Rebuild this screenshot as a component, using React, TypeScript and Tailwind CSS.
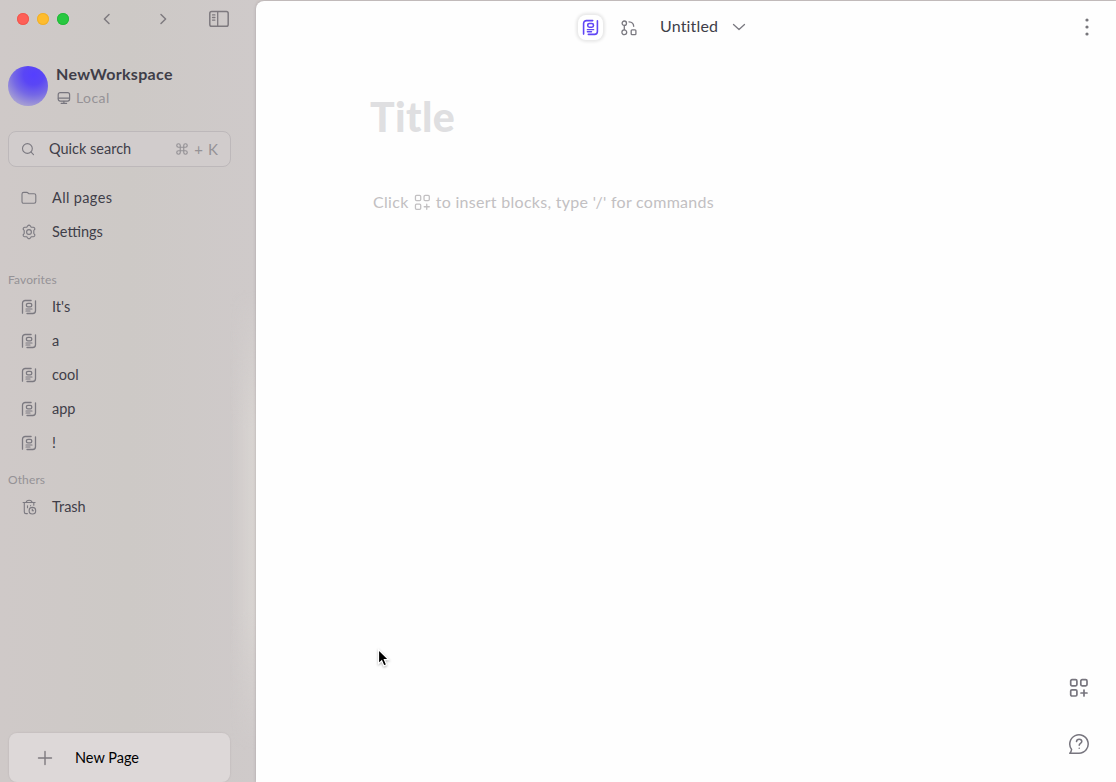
import type { ReactNode } from "react";

type IconProps = { className?: string };

function Svg({ className = "", size = 24, children }: { className?: string; size?: number; children: ReactNode }) {
  return (
    <svg
      viewBox={`0 0 ${size} ${size}`}
      fill="none"
      stroke="currentColor"
      strokeWidth={1.5}
      strokeLinecap="round"
      strokeLinejoin="round"
      className={`shrink-0 ${className}`}
    >
      {children}
    </svg>
  );
}

function PageIcon({ className }: IconProps) {
  return (
    <Svg className={className} size={16}>
      <path d="M1.5 14.2V4.2a2.7 2.7 0 0 1 2.7-2.7h5.9" />
      <path d="M14.5 1.8v10a2.7 2.7 0 0 1-2.7 2.7H6" />
      <rect x="5.4" y="4.3" width="5.4" height="3.5" rx="1.6" />
      <path d="M5 10h6M5 12h4" strokeWidth="1.2" />
    </Svg>
  );
}

function BlocksIcon({ className }: IconProps) {
  return (
    <Svg className={className} size={20}>
      <rect x="1.7" y="1.7" width="6.2" height="6.2" rx="1.3" />
      <rect x="11.8" y="1.7" width="6.2" height="6.2" rx="1.3" />
      <rect x="1.7" y="11.8" width="6.2" height="6.2" rx="1.3" />
      <path d="M15 12v6M12 15h6" />
    </Svg>
  );
}

function EdgelessIcon({ className }: IconProps) {
  return (
    <Svg className={className} size={16}>
      <circle cx="3.3" cy="3.2" r="2.2" />
      <circle cx="3.3" cy="12.3" r="2.4" />
      <rect x="10.2" y="9.9" width="4.7" height="4.7" rx="0.9" />
      <path d="M3.3 5.5v4.200M8 1.8c2.7.2 4.6 2 4.7 4.5" />
    </Svg>
  );
}

function NavRow({ icon, label, className = "tracking-normal" }: { icon: ReactNode; label: string; className?: string }) {
  return (
    <div className="flex h-[34px] items-center pl-[21px] text-[#3f3e49]">
      <span className="flex w-[31px] items-center text-[#7b7980]">{icon}</span>
      <span className={`text-[14.5px] leading-[20px] ${className}`}>{label}</span>
    </div>
  );
}

const favorites = ["It's", "a", "cool", "app", "!"];

function Sidebar() {
  return (
    <aside className="relative flex h-full w-[256px] shrink-0 flex-col bg-linear-to-r from-[#cfc9c8] via-[#cdc9c6] to-[#cfcaca]">
      <div className="absolute top-[290px] right-0 h-[460px] w-[26px] bg-linear-to-r from-[#d9d5d2]/0 to-[#d9d5d2] mask-y-from-70% mask-y-to-100%" />
      <div className="flex h-[38px] items-center pl-[17px] text-[#7e7a7f]">
        <span className="flex gap-2">
          <span className="size-3 rounded-full bg-[#fe5f57] inset-ring inset-ring-[#f0584f]" />
          <span className="size-3 rounded-full bg-[#febc2e] inset-ring inset-ring-[#efb02c]" />
          <span className="size-3 rounded-full bg-[#28c840] inset-ring inset-ring-[#24ba3a]" />
        </span>
        <Svg className="ml-[32px] size-3" size={12}><path d="M8 1.5 3.4 6 8 10.5" /></Svg>
        <Svg className="ml-[44px] size-3" size={12}><path d="M4 1.5 8.6 6 4 10.5" /></Svg>
        <Svg className="ml-[40px] size-5" size={20}>
          <rect x="0.8" y="2.6" width="18.4" height="14.6" rx="1.8" />
          <path d="M8.7 2.6v14.6M3.5 5.9h2.4M3.5 8.5h2.4M3.5 11.1h2.4" strokeWidth="1.3" />
        </Svg>
      </div>

      <div className="mt-[26px] flex h-[44px] items-center pl-2">
        <div className="size-10 rounded-full bg-[radial-gradient(circle_at_64%_22%,#553fff_0%,#5a46f5_25%,#7568e5_50%,#9f97d6_75%,#b8b2d0_95%)]" />
        <div className="ml-2">
          <div className="text-[16px] leading-[22px] font-bold tracking-[0.02em] text-[#3f3e49]">NewWorkspace</div>
          <div className="mt-[2px] flex h-[22px] items-center text-[#959296]">
            <Svg className="ml-[1px] size-[14px] text-[#77757e]" size={14}>
              <rect x="1.2" y="1.7" width="11.4" height="8.4" rx="2" strokeWidth="1.2" />
              <path d="M1.4 7.2h11M6.9 10.3v2M4.2 12.4h5.4" strokeWidth="1.2" />
            </Svg>
            <span className="ml-[5px] text-[14px] leading-[20px] tracking-[0.03em]">Local</span>
          </div>
        </div>
      </div>

      <div className="mt-[23px] ml-2 flex h-[36px] w-[223px] items-center rounded-lg border border-[#bdb8ba] bg-[#d1cccc] px-3">
        <Svg className="size-[14px] text-[#7b7980]" size={14}>
          <circle cx="6.4" cy="6.5" r="4.9" strokeWidth="1.1" />
          <path d="m10.1 10.2 2.4 2.4" strokeWidth="1.1" />
        </Svg>
        <span className="ml-[14px] text-[14.5px] leading-[20px] text-[#3f3e49]">Quick search</span>
        <span className="ml-auto flex items-center gap-[5px] text-[15px] leading-[20px] text-[#959296]">
          <Svg className="size-[14px]" size={24}>
            <path strokeWidth="2" d="M15 6v12a3 3 0 1 0 3-3H6a3 3 0 1 0 3 3V6a3 3 0 1 0-3 3h12a3 3 0 1 0-3-3" />
          </Svg>
          <span>+</span>
          <span>K</span>
        </span>
      </div>

      <nav className="mt-[14px] flex flex-col">
        <NavRow
          label="All pages"
          className="tracking-[0.025em]"
          icon={
            <Svg className="size-4" size={16}>
              <path strokeWidth="1.1" d="M1 4.1c0-1.2.6-1.7 1.7-1.7h3.1c.5 0 .9.2 1.3.6l.9.8h5.1c1.1 0 1.7.6 1.7 1.7v6.1c0 1.1-.6 1.7-1.7 1.7H2.7c-1.1 0-1.7-.6-1.7-1.7z" />
            </Svg>
          }
        />
        <NavRow
          label="Settings"
          icon={
            <Svg className="size-4" size={16}>
              <path strokeWidth="1.1" d="M6.700 1.800q1.300-1.200 2.600 0l.9 1.500 2.200-.1q1.500.4 1.500 1.900L12.800 6.500v3l1.100 1.400q0 1.500-1.500 1.900l-2.200-.1-.9 1.500q-1.300 1.200-2.600 0l-.9-1.500-2.200.1q-1.500-.4-1.500-1.900L3.200 9.500v-3L2.100 5.100q0-1.500 1.500-1.900l2.200.1z" />
              <circle cx="8" cy="8" r="2.4" strokeWidth="1.1" />
            </Svg>
          }
        />
      </nav>

      <h2 className="mt-[22px] pl-2 text-[12px] leading-[18px] tracking-[0.01em] text-[#959296]">Favorites</h2>
      <nav className="mt-px flex flex-col">
        {favorites.map((name) => (
          <NavRow key={name} label={name} icon={<PageIcon className="size-4 stroke-[1.3]" />} />
        ))}
      </nav>

      <h2 className="mt-[11px] pl-2 text-[12px] leading-[18px] tracking-[0.01em] text-[#959296]">Others</h2>
      <nav className="mt-px flex flex-col">
        <NavRow
          label="Trash"
          icon={
            <Svg className="size-4" size={16}>
              <g strokeWidth="1.1">
                <path d="M2.1 3.5h12M5.2 3.3c.2-2.7 5.6-2.7 5.8 0M3.3 3.7v9.2c0 1.1.6 1.7 1.7 1.7h1.4M12.8 3.7v2.6M6.5 6.7v2M9.6 6.5v.2" />
                <circle cx="11.4" cy="11.7" r="3.3" />
                <path d="M11.3 10.1v1.7h1.3" />
              </g>
            </Svg>
          }
        />
      </nav>

      <button className="mt-auto ml-[9px] flex h-[49px] w-[221px] items-center rounded-lg bg-[#ddd8d8] pl-[28px] text-black shadow-[0_0_1px_1px_rgba(110,105,110,0.08)]">
        <Svg className="size-4 text-[#7e7a7f]" size={16}><path d="M8 1.5v13M1.5 8h13" strokeWidth="1.4" /></Svg>
        <span className="ml-[22px] text-[14.5px] leading-[20px]">New Page</span>
      </button>
    </aside>
  );
}

function Editor() {
  return (
    <div className="min-w-0 flex-1 bg-[#cfc9c8] pt-px">
      <main className="relative flex h-full flex-col rounded-tl-lg bg-[#fefefe] shadow-[0_0_3px_rgba(80,70,80,0.3)]">
        <header className="flex h-[52px] items-center pr-[21px] pl-[322px] text-[#7a7980]">
          <span className="flex size-[25px] items-center justify-center rounded-lg bg-white text-[#6046f5] shadow-[0_0_3px_2px_rgba(0,0,0,0.09)]">
            <PageIcon className="size-[17px]" />
          </span>
          <EdgelessIcon className="mt-px ml-[18px] size-4 stroke-[1.3]" />
          <span className="-mt-[2px] ml-[23px] w-[58px] text-[16px] leading-[22px] tracking-[0.01em] whitespace-nowrap text-[#3f3e49]">Untitled</span>
          <Svg className="ml-[14px] size-[14px]" size={14}><path d="m1.5 4.5 5.5 5 5.5-5" strokeWidth="1.3" /></Svg>
          <svg viewBox="0 0 16 20" className="ml-auto h-5 w-4" fill="#77767b">
            <circle cx="8" cy="3" r="1.6" />
            <circle cx="8" cy="10" r="1.6" />
            <circle cx="8" cy="17" r="1.6" />
          </svg>
        </header>

        <section className="pl-[114px]">
          <h1 className="mt-[39px] text-[41px] leading-[50px] font-black tracking-[0.01em] text-[#dfdfe1]">Title</h1>
          <p className="mt-[48px] flex items-center pl-[3px] text-[16px] leading-[24px] whitespace-nowrap text-[#c2c0c2]">
            <span className="tracking-[0.02em]">Click</span>
            <BlocksIcon className="mt-px mr-[5px] ml-[5px] size-[17px] stroke-[1.5]" />
            <span className="tracking-[0.018em]">to insert blocks, type '/' for commands</span>
          </p>
        </section>

        <div className="mt-auto flex flex-col items-end gap-[35px] pr-[27px] pb-[27px] text-[#77757e]">
          <BlocksIcon className="size-5 stroke-[1.7]" />
          <Svg className="-mr-px size-[22px]" size={22}>
            <path d="M1.8 20.2h9.2A9.2 9.2 0 1 0 3.6 16.5c-.2 1.6-.8 2.7-1.8 3.7Z" />
            <path d="M8.5 8.6c.2-3.3 5.3-3 5.3-.1 0 1.9-2.6 1.9-2.6 3.8M11.2 15.2v.1" />
          </Svg>
        </div>

        <svg viewBox="0 0 16 22" className="absolute top-[647px] left-[121px] h-[22px] w-4 drop-shadow-[0_1px_1px_rgba(0,0,0,0.3)]">
          <path d="M1.5 1.5v14.2l3.2-3 2.2 5.2 2.7-1.1-2.2-5.1h4.4z" fill="#000" stroke="#fff" strokeWidth="1.2" />
        </svg>
      </main>
    </div>
  );
}

export default function App() {
  return (
    <div className="flex h-[782px] w-[1116px] overflow-hidden bg-[#cfc9c8] font-['Lato','Liberation_Sans',sans-serif]">
      <Sidebar />
      <Editor />
    </div>
  );
}
